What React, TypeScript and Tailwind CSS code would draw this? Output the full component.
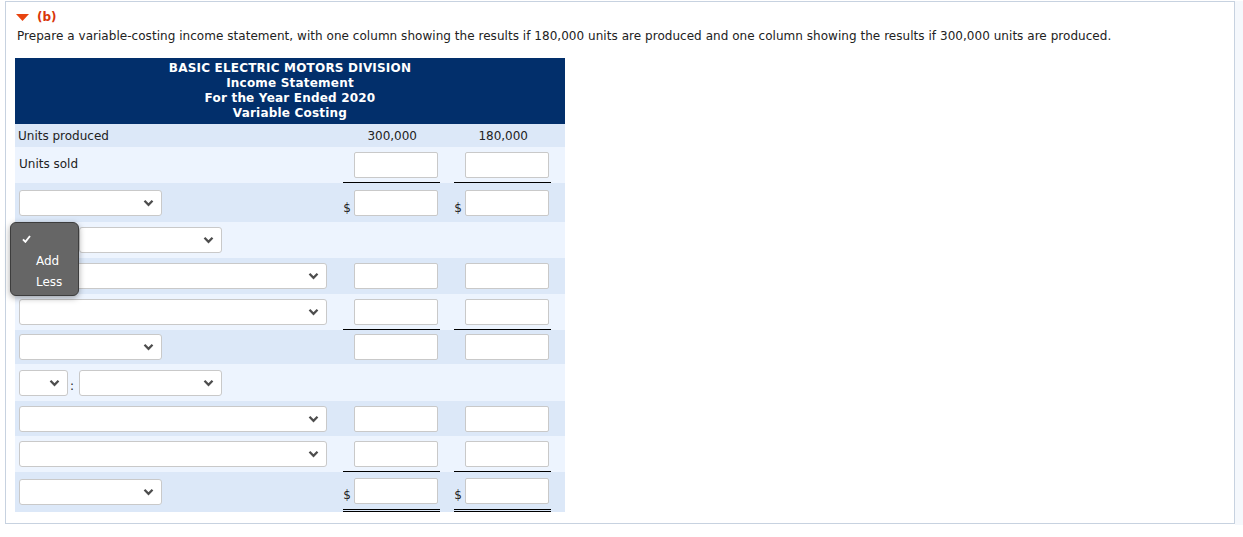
import React from 'react';

const font = { fontFamily: '"DejaVu Sans", Verdana, sans-serif' };

function Chevron() {
  return (
    <svg width="11" height="8" viewBox="0 0 11 8" className="shrink-0" aria-hidden="true">
      <path d="M1.5 1.8 L5.5 5.8 L9.5 1.8" fill="none" stroke="#4d4d4d" strokeWidth="2.3" />
    </svg>
  );
}

function Select({ w }: { w: string }) {
  return (
    <div
      className={`flex h-[26px] ${w} items-center justify-end rounded-[3px] border border-[#c9c9c9] bg-white pr-[7px]`}
    >
      <Chevron />
    </div>
  );
}

function Box() {
  return <div className="h-[26px] w-[84px] rounded-[2px] border border-[#c9c9c9] bg-white" />;
}

type Line = 'none' | 'single' | 'double';

function Cell({ dollar, box = true, line = 'none' }: { dollar?: boolean; box?: boolean; line?: Line }) {
  const rule =
    line === 'single'
      ? 'border-b border-black'
      : line === 'double'
        ? 'border-b-[3px] border-double border-black'
        : '';
  return (
    <div className={`flex h-full w-[97px] items-center justify-end pr-[2px] ${rule}`}>
      {dollar && <span className="mr-[3px] self-end pb-[5px] text-[12px] text-[#222]">$</span>}
      {box && <Box />}
    </div>
  );
}

function Row({
  h,
  dark,
  label,
  cells,
}: {
  h: string;
  dark?: boolean;
  label: React.ReactNode;
  cells: [React.ReactNode, React.ReactNode];
}) {
  return (
    <div className={`flex ${h} ${dark ? 'bg-[#dce8f8]' : 'bg-[#edf4fe]'}`}>
      <div className="flex w-[328px] items-center pl-[4px]">{label}</div>
      {cells[0]}
      <div className="w-[14px]" />
      {cells[1]}
    </div>
  );
}

export default function App() {
  return (
    <div className="min-h-[537px] bg-white pt-[1px] pl-[5px] text-[#222]" style={font}>
      <div className="flex">
        <div className="h-[523px] w-[1230px] border border-[#c7d2e0] bg-white pl-[9px] pt-[6px]">
          <div className="flex items-center gap-[8px] pl-[1px]">
            <svg width="13" height="7" viewBox="0 0 13 7" aria-hidden="true">
              <path d="M0 0 H13 L6.5 7 Z" fill="#e8440f" />
            </svg>
            <span className="text-[12px] font-bold text-[#d9360b]">(b)</span>
          </div>
          <p className="mt-[2px] pl-[2px] text-[12px] leading-[16px] tracking-[0.04px]">
            Prepare a variable-costing income statement, with one column showing the results if 180,000 units are
            produced and one column showing the results if 300,000 units are produced.
          </p>

          <div className="mt-[14px] w-[550px]">
            <div className="flex h-[66px] flex-col items-center justify-center bg-[#022f6b] text-[12px] font-bold leading-[15px] tracking-[0.2px] text-white">
              <div>BASIC ELECTRIC MOTORS DIVISION</div>
              <div>Income Statement</div>
              <div>For the Year Ended 2020</div>
              <div>Variable Costing</div>
            </div>

            <div className="flex h-[23px] items-center bg-[#dce8f8] text-[12px]">
              <div className="w-[328px] pl-[3px]">Units produced</div>
              <div className="w-[74px] text-right">300,000</div>
              <div className="w-[111px] text-right">180,000</div>
            </div>

            <Row
              h="h-[36px]"
              label={<span className="-mt-[3px] text-[12px]">Units sold</span>}
              cells={[<Cell key="a" line="single" />, <Cell key="b" line="single" />]}
            />
            <Row
              h="h-[39px]"
              dark
              label={<Select w="w-[143px]" />}
              cells={[<Cell key="a" dollar />, <Cell key="b" dollar />]}
            />
            <Row
              h="h-[36px]"
              label={
                <div className="pl-[60px]">
                  <Select w="w-[143px]" />
                </div>
              }
              cells={[<Cell key="a" box={false} />, <Cell key="b" box={false} />]}
            />
            <Row
              h="h-[36px]"
              dark
              label={<Select w="w-[308px]" />}
              cells={[<Cell key="a" />, <Cell key="b" />]}
            />
            <Row
              h="h-[36px]"
              label={<Select w="w-[308px]" />}
              cells={[<Cell key="a" line="single" />, <Cell key="b" line="single" />]}
            />
            <Row
              h="h-[34px]"
              dark
              label={<Select w="w-[143px]" />}
              cells={[<Cell key="a" />, <Cell key="b" />]}
            />
            <Row
              h="h-[37px]"
              label={
                <div className="flex items-center">
                  <Select w="w-[49px]" />
                  <span className="mt-[6px] w-[11px] pl-[2px] text-[12px]">:</span>
                  <Select w="w-[143px]" />
                </div>
              }
              cells={[<Cell key="a" box={false} />, <Cell key="b" box={false} />]}
            />
            <Row
              h="h-[35px]"
              dark
              label={<Select w="w-[308px]" />}
              cells={[<Cell key="a" />, <Cell key="b" />]}
            />
            <Row
              h="h-[36px]"
              label={<Select w="w-[308px]" />}
              cells={[<Cell key="a" line="single" />, <Cell key="b" line="single" />]}
            />
            <Row
              h="h-[40px]"
              dark
              label={<Select w="w-[143px]" />}
              cells={[<Cell key="a" dollar line="double" />, <Cell key="b" dollar line="double" />]}
            />
          </div>
        </div>
        <div className="h-[524px] flex-1 bg-[#f5f8fc]" />
      </div>

      {/* open dropdown list for the Add / Less select */}
      <div className="absolute left-[10px] top-[222px] h-[74px] w-[69px] rounded-[6px] border border-[#3d3d3d] bg-[#666666] pt-[12px] text-[12px] text-white shadow-[0_2px_6px_rgba(0,0,0,0.35)]">
        <div className="h-[17px] pl-[11px]">
          <svg width="9" height="8" viewBox="0 0 9 8" aria-hidden="true">
            <path d="M1 4.3 L3.4 6.8 L8 1" fill="none" stroke="white" strokeWidth="1.9" />
          </svg>
        </div>
        <div className="h-[21px] pl-[25px] leading-[18px]">Add</div>
        <div className="pl-[25px] leading-[18px]">Less</div>
      </div>
    </div>
  );
}
